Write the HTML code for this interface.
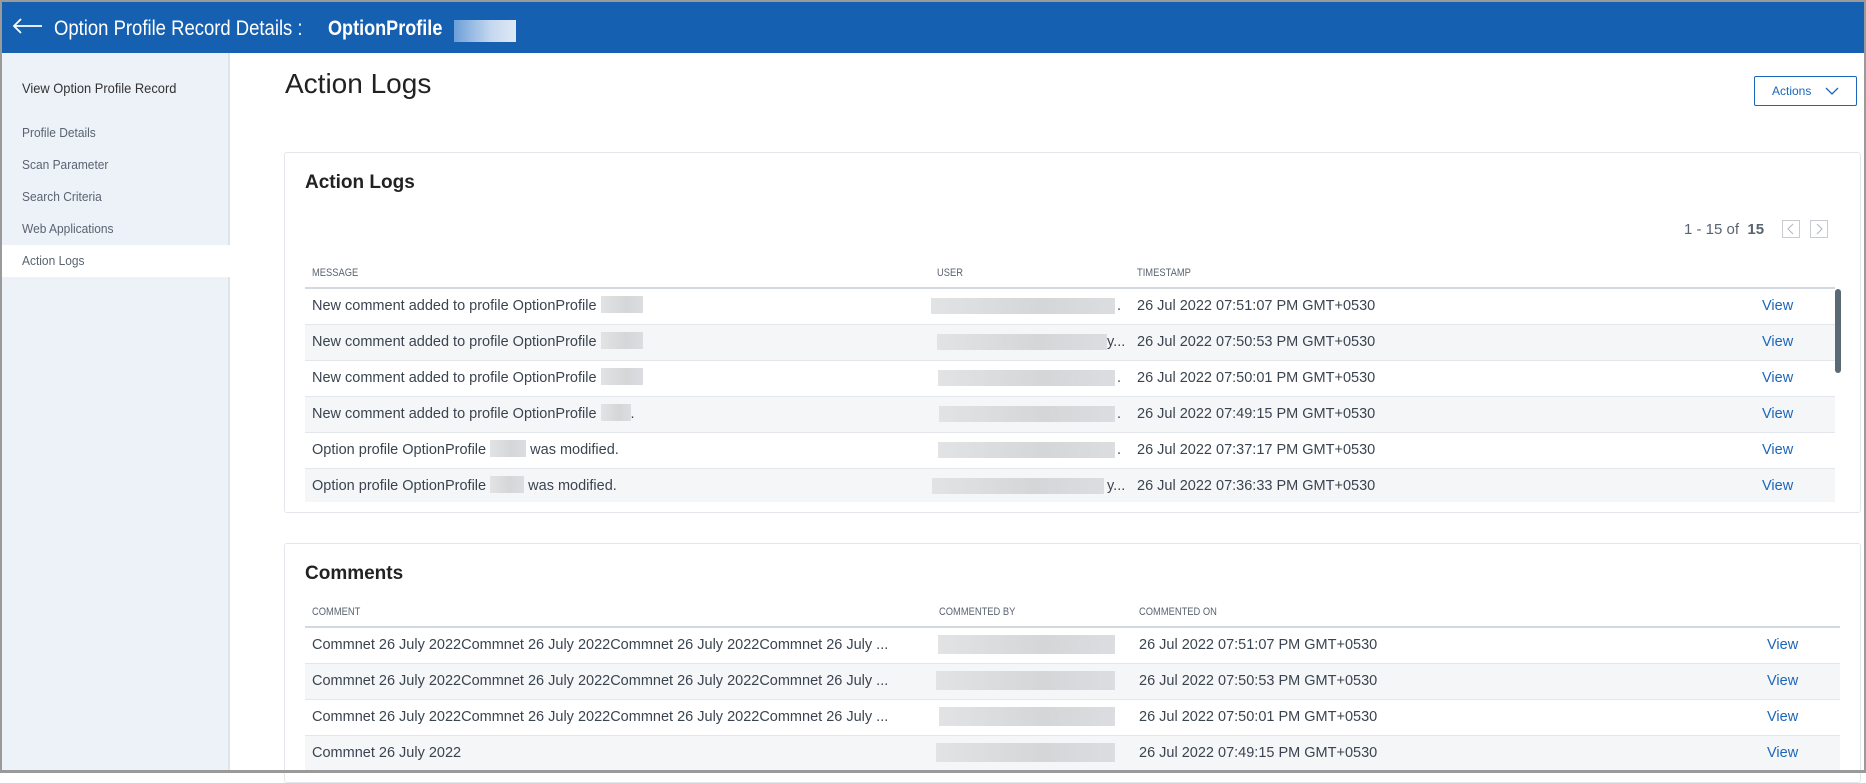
<!DOCTYPE html>
<html><head><meta charset="utf-8"><style>
*{margin:0;padding:0;box-sizing:border-box}
body{width:1866px;height:773px;overflow:hidden;background:#fff;font-family:"Liberation Sans",Arial,sans-serif;position:relative;color:#3a4450}
.abs{position:absolute}
.frame{position:absolute;left:0;top:0;width:1866px;height:773px;border:2px solid #9a9a9a;border-bottom:3px solid #9a9a9a;pointer-events:none;z-index:10}
.hdr{left:0;top:0;width:1866px;height:53px;background:#1560b0;color:#fff}
.side{left:2px;top:53px;width:228px;height:720px;background:#edf1f8;border-right:2px solid #dfe3ea}
.nav{position:absolute;left:20px;font-size:13px;color:#5a6470;transform:scaleX(.92);transform-origin:left}
.card{position:absolute;border:1px solid #e3e6ea;border-radius:3px;background:#fff}
.th{position:absolute;font-size:11px;color:#5a6470;transform:scaleX(.85);transform-origin:left}
.row{position:absolute;height:36px;border-bottom:1px solid #e3e7ec;font-size:14.5px;color:#3a4450}
.row span{position:absolute;top:9px;white-space:nowrap}
.blur{position:absolute;background:linear-gradient(90deg,#e2e3e5,#d4d6d8 60%,#dcdde0);}
.ib{display:inline-block;vertical-align:middle;height:17px;background:linear-gradient(90deg,#e2e3e5,#d4d6d8 60%,#dcdde0);margin-top:-3px}
.v{color:#1b66b8}
</style></head><body>
<div class="abs hdr">
<svg class="abs" style="left:12px;top:18px" width="32" height="16" viewBox="0 0 32 16"><path d="M2 8H30M9 1L2 8L9 15" stroke="#fff" stroke-width="1.8" fill="none"/></svg>
<div class="abs" style="left:54px;top:17px;font-size:21px;white-space:nowrap;transform:scaleX(.88);transform-origin:left">Option Profile Record Details :</div>
<div class="abs" style="left:328px;top:17px;font-size:21px;font-weight:bold;white-space:nowrap;transform:scaleX(.86);transform-origin:left">OptionProfile</div>
<div class="abs" style="left:454px;top:20px;width:62px;height:22px;background:linear-gradient(90deg,#6d9fd9,#c5d8ee 60%,#dfe9f5)"></div>
</div>
<div class="abs side">
<div class="nav" style="top:27px;font-size:14px;color:#333">View Option Profile Record</div>
<div class="nav" style="top:72px">Profile Details</div>
<div class="nav" style="top:104px">Scan Parameter</div>
<div class="nav" style="top:136px">Search Criteria</div>
<div class="nav" style="top:168px">Web Applications</div>
<div style="position:absolute;left:0;top:192px;width:228px;height:32px;background:#fff"></div>
<div class="nav" style="top:200px">Action Logs</div>
</div>
<div class="abs" style="left:285px;top:68px;font-size:28px;color:#222">Action Logs</div>
<div class="abs" style="left:1754px;top:76px;width:103px;height:30px;border:1.5px solid #1b66b8;border-radius:2px;color:#1b66b8;font-size:12px;padding:7px 0 0 17px">Actions
<svg class="abs" style="left:70px;top:10px" width="14" height="9" viewBox="0 0 14 9"><path d="M1 1L7 7L13 1" stroke="#1b66b8" stroke-width="1.3" fill="none"/></svg></div>

<div class="card" style="left:284px;top:152px;width:1577px;height:361px"></div>
<div class="abs" style="left:305px;top:172px;font-size:19px;font-weight:bold;color:#222">Action Logs</div>
<div class="abs" style="left:1684px;top:221px;font-size:15px;color:#5a6470">1 - 15 of&nbsp; <b>15</b></div>
<div class="abs" style="left:1782px;top:220px;width:18px;height:18px;border:1px solid #c8ccd0"><svg width="16" height="16"><path d="M10 3L5 8L10 13" stroke="#b0b6bc" fill="none"/></svg></div>
<div class="abs" style="left:1810px;top:220px;width:18px;height:18px;border:1px solid #c8ccd0"><svg width="16" height="16"><path d="M6 3L11 8L6 13" stroke="#b0b6bc" fill="none"/></svg></div>
<div class="th" style="left:312px;top:267px">MESSAGE</div>
<div class="th" style="left:937px;top:267px">USER</div>
<div class="th" style="left:1137px;top:267px">TIMESTAMP</div>
<div class="abs" style="left:305px;top:287px;width:1530px;height:2px;background:#d3d8de"></div>

<div class="row" style="left:305px;top:289px;width:1530px;background:#fff"><span style="left:7px">New comment added to profile OptionProfile <i class="ib" style="width:42px"></i></span><div class="blur" style="left:626px;top:9px;width:184px;height:16px"></div><span style="left:812px">.</span><span style="left:832px">26 Jul 2022 07:51:07 PM GMT+0530</span><span class="v" style="left:1457px">View</span></div>
<div class="row" style="left:305px;top:325px;width:1530px;background:#f5f6f8"><span style="left:7px">New comment added to profile OptionProfile <i class="ib" style="width:42px"></i></span><div class="blur" style="left:632px;top:9px;width:170px;height:16px"></div><span style="left:802px">y...</span><span style="left:832px">26 Jul 2022 07:50:53 PM GMT+0530</span><span class="v" style="left:1457px">View</span></div>
<div class="row" style="left:305px;top:361px;width:1530px;background:#fff"><span style="left:7px">New comment added to profile OptionProfile <i class="ib" style="width:42px"></i></span><div class="blur" style="left:633px;top:9px;width:177px;height:16px"></div><span style="left:812px">.</span><span style="left:832px">26 Jul 2022 07:50:01 PM GMT+0530</span><span class="v" style="left:1457px">View</span></div>
<div class="row" style="left:305px;top:397px;width:1530px;background:#f5f6f8"><span style="left:7px">New comment added to profile OptionProfile <i class="ib" style="width:30px"></i>.</span><div class="blur" style="left:634px;top:9px;width:176px;height:16px"></div><span style="left:812px">.</span><span style="left:832px">26 Jul 2022 07:49:15 PM GMT+0530</span><span class="v" style="left:1457px">View</span></div>
<div class="row" style="left:305px;top:433px;width:1530px;background:#fff"><span style="left:7px">Option profile OptionProfile <i class="ib" style="width:36px"></i> was modified.</span><div class="blur" style="left:633px;top:9px;width:177px;height:16px"></div><span style="left:812px">.</span><span style="left:832px">26 Jul 2022 07:37:17 PM GMT+0530</span><span class="v" style="left:1457px">View</span></div>
<div class="row" style="left:305px;top:469px;width:1530px;height:33px;background:#f5f6f8;border:none"><span style="left:7px">Option profile OptionProfile <i class="ib" style="width:34px"></i> was modified.</span><div class="blur" style="left:627px;top:9px;width:172px;height:16px"></div><span style="left:802px">y...</span><span style="left:832px">26 Jul 2022 07:36:33 PM GMT+0530</span><span class="v" style="left:1457px">View</span></div>
<div class="abs" style="left:1835px;top:289px;width:6px;height:84px;background:#5a6a75;border-radius:3px"></div>

<div class="card" style="left:284px;top:543px;width:1577px;height:240px"></div>
<div class="abs" style="left:305px;top:563px;font-size:19px;font-weight:bold;color:#222">Comments</div>
<div class="th" style="left:312px;top:606px">COMMENT</div>
<div class="th" style="left:939px;top:606px">COMMENTED BY</div>
<div class="th" style="left:1139px;top:606px">COMMENTED ON</div>
<div class="abs" style="left:305px;top:626px;width:1535px;height:2px;background:#d3d8de"></div>
<div class="row" style="left:305px;top:628px;width:1535px;background:#fff"><span style="left:7px">Commnet 26 July 2022Commnet 26 July 2022Commnet 26 July 2022Commnet 26 July ...</span><div class="blur" style="left:633px;top:7px;width:177px;height:19px"></div><span style="left:834px">26 Jul 2022 07:51:07 PM GMT+0530</span><span class="v" style="left:1462px">View</span></div>
<div class="row" style="left:305px;top:664px;width:1535px;background:#f5f6f8"><span style="left:7px">Commnet 26 July 2022Commnet 26 July 2022Commnet 26 July 2022Commnet 26 July ...</span><div class="blur" style="left:631px;top:7px;width:179px;height:19px"></div><span style="left:834px">26 Jul 2022 07:50:53 PM GMT+0530</span><span class="v" style="left:1462px">View</span></div>
<div class="row" style="left:305px;top:700px;width:1535px;background:#fff"><span style="left:7px">Commnet 26 July 2022Commnet 26 July 2022Commnet 26 July 2022Commnet 26 July ...</span><div class="blur" style="left:634px;top:7px;width:176px;height:19px"></div><span style="left:834px">26 Jul 2022 07:50:01 PM GMT+0530</span><span class="v" style="left:1462px">View</span></div>
<div class="row" style="left:305px;top:736px;width:1535px;background:#f5f6f8"><span style="left:7px">Commnet 26 July 2022</span><div class="blur" style="left:631px;top:7px;width:179px;height:19px"></div><span style="left:834px">26 Jul 2022 07:49:15 PM GMT+0530</span><span class="v" style="left:1462px">View</span></div>
<div class="frame"></div>
</body></html>
